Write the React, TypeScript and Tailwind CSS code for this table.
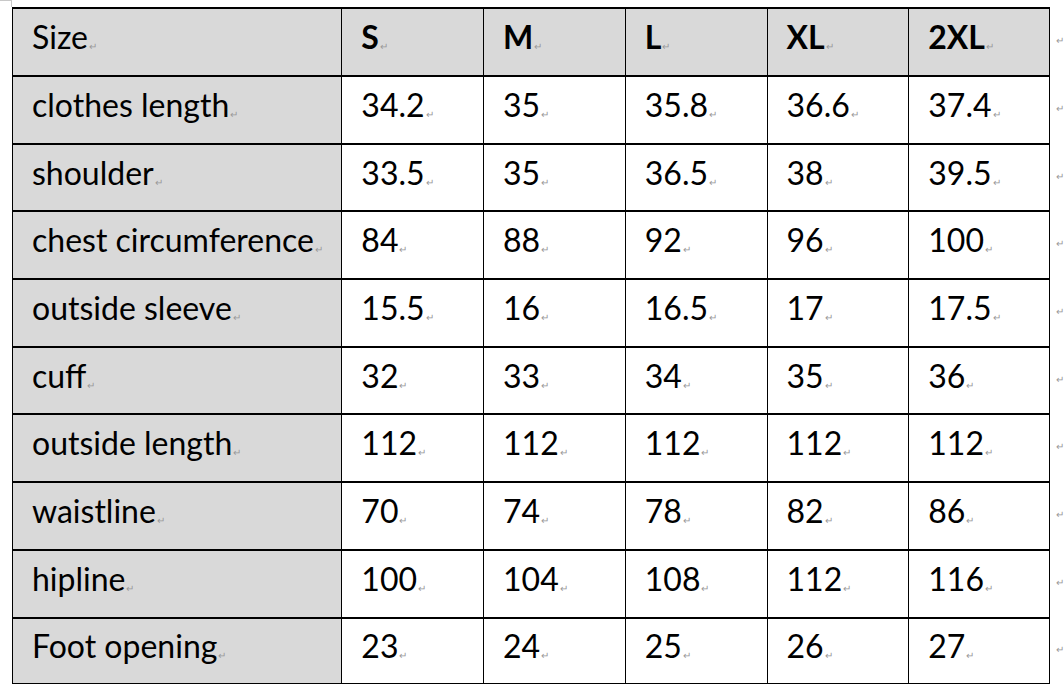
const sizes = ["S", "M", "L", "XL", "2XL"];

const rows: { label: string; values: string[] }[] = [
  { label: "clothes length", values: ["34.2", "35", "35.8", "36.6", "37.4"] },
  { label: "shoulder", values: ["33.5", "35", "36.5", "38", "39.5"] },
  { label: "chest circumference", values: ["84", "88", "92", "96", "100"] },
  { label: "outside sleeve", values: ["15.5", "16", "16.5", "17", "17.5"] },
  { label: "cuff", values: ["32", "33", "34", "35", "36"] },
  { label: "outside length", values: ["112", "112", "112", "112", "112"] },
  { label: "waistline", values: ["70", "74", "78", "82", "86"] },
  { label: "hipline", values: ["100", "104", "108", "112", "116"] },
  { label: "Foot opening", values: ["23", "24", "25", "26", "27"] },
];

// little word-processor paragraph mark
function Mark() {
  return <span className="ml-[1px] text-[10px] leading-none text-[#999999]">↵</span>;
}

function Cell({
  text,
  first,
  last,
  bottom,
  gray,
  bold,
}: {
  text: string;
  first?: boolean;
  last?: boolean;
  bottom?: boolean;
  gray?: boolean;
  bold?: boolean;
}) {
  return (
    <div
      className={[
        "flex items-center pl-[19px] pb-[10px] border-t-2 border-l border-black",
        first ? "w-[330px]" : "w-[142px]",
        last ? "border-r" : "",
        bottom ? "border-b" : "",
        gray ? "bg-[#d9d9d9]" : "bg-white",
      ].join(" ")}
    >
      <span className={"text-[32px] leading-none text-black " + (bold ? "font-bold" : "")}>{text}</span>
      <span className="self-center mt-[14px]">
        <Mark />
      </span>
    </div>
  );
}

export default function App() {
  return (
    <div
      className="w-[1064px] h-[696px] bg-white overflow-hidden"
      style={{ fontFamily: "Lato, 'Noto Sans', sans-serif" }}
    >
      {/* corner marker */}
      <div className="w-[12px] h-[7px] border-t border-r border-[#c8c8c8]" />

      <div className="pl-[12px]">
        {/* HEADER */}
        <div className="flex h-[68px]">
          <Cell text="Size" first gray />
          {sizes.map((s, i) => (
            <Cell key={s} text={s} gray bold last={i === sizes.length - 1} />
          ))}
          <div className="flex items-center pl-[5px] pb-[2px]">
            <Mark />
          </div>
        </div>

        {/* BODY */}
        {rows.map((r, ri) => (
          <div key={r.label} className="flex h-[67.7px]">
            <Cell text={r.label} first gray bottom={ri === rows.length - 1} />
            {r.values.map((v, i) => (
              <Cell
                key={i}
                text={v}
                last={i === r.values.length - 1}
                bottom={ri === rows.length - 1}
              />
            ))}
            <div className="flex items-center pl-[5px] pb-[2px]">
              <Mark />
            </div>
          </div>
        ))}
      </div>
    </div>
  );
}
